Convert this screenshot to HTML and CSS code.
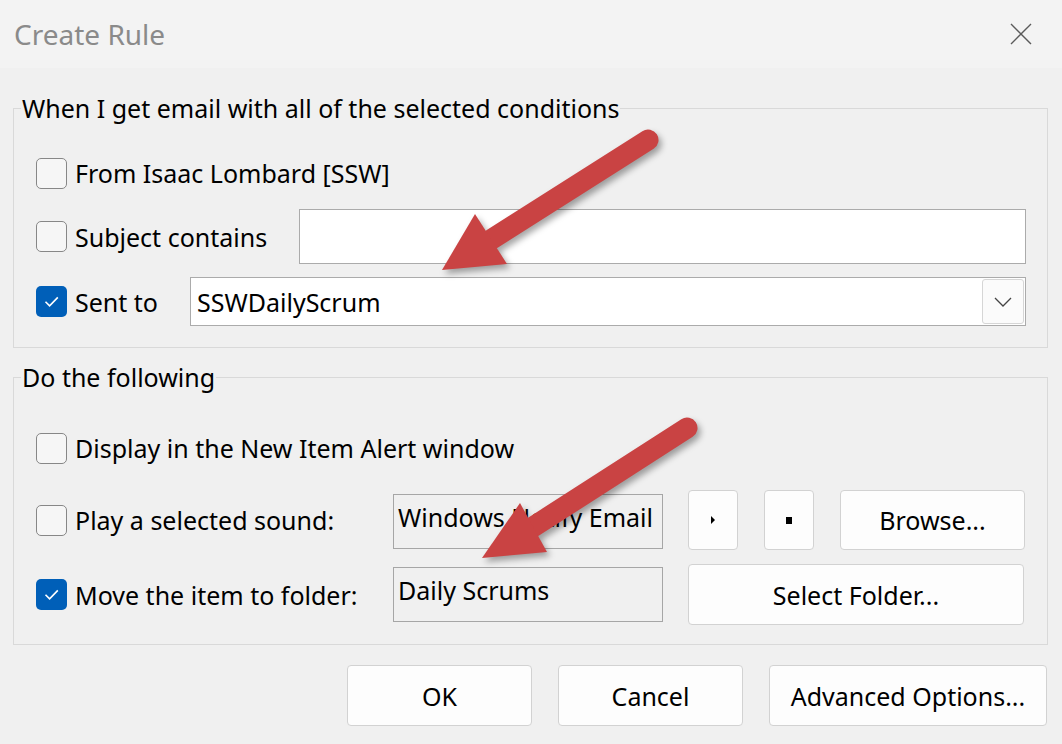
FILE: index.html
```html
<!DOCTYPE html>
<html>
<head>
<meta charset="utf-8">
<link rel="stylesheet" href="styles.css">
</head>
<body>
<div class="window">
  <div class="titlebar">
    <span class="title">Create Rule</span>
    <svg class="close" width="22" height="22" viewBox="0 0 22 22"><path d="M1 1L21 21M21 1L1 21" stroke="#5a5a5a" stroke-width="1.4" fill="none"/></svg>
  </div>

  <fieldset class="group g1">
    <legend>When I get email with all of the selected conditions</legend>
    <div class="row r1">
      <label class="check"><span class="box"></span>From Isaac Lombard [SSW]</label>
    </div>
    <div class="row r2">
      <label class="check w-subject"><span class="box"></span>Subject contains</label>
      <div class="textbox subject"></div>
    </div>
    <div class="row r3">
      <label class="check w-sent"><span class="box checked"><svg width="31" height="31" viewBox="0 0 31 31"><path d="M9.5 15.8L13.6 19.9L21.8 11.4" stroke="#fff" stroke-width="1.6" fill="none"/></svg></span>Sent to</label>
      <div class="combo">
        <span class="combo-text">SSWDailyScrum</span>
        <span class="drop"><svg width="18" height="10" viewBox="0 0 18 10"><path d="M1 1L9 9L17 1" stroke="#444" stroke-width="1.3" fill="none"/></svg></span>
      </div>
    </div>
  </fieldset>

  <fieldset class="group g2">
    <legend>Do the following</legend>
    <div class="row s1">
      <label class="check"><span class="box"></span>Display in the New Item Alert window</label>
    </div>
    <div class="row s2">
      <label class="check w-action"><span class="box"></span>Play a selected sound:</label>
      <div class="field"><span>Windows Notify Email</span></div>
      <button class="btn small"><span class="play"></span></button>
      <button class="btn small"><span class="stop"></span></button>
      <button class="btn browse">Browse...</button>
    </div>
    <div class="row s3">
      <label class="check w-action"><span class="box checked"><svg width="31" height="31" viewBox="0 0 31 31"><path d="M9.5 15.8L13.6 19.9L21.8 11.4" stroke="#fff" stroke-width="1.6" fill="none"/></svg></span>Move the item to folder:</label>
      <div class="field folder"><span>Daily Scrums</span></div>
      <button class="btn select">Select Folder...</button>
    </div>
  </fieldset>

  <div class="footer">
    <button class="btn dlg">OK</button>
    <button class="btn dlg">Cancel</button>
    <button class="btn dlg adv">Advanced Options...</button>
  </div>

  <svg class="arrows" width="1062" height="744" viewBox="0 0 1062 744">
    <g class="arrow">
      <line x1="648" y1="140" x2="492" y2="239" stroke="#c94343" stroke-width="21" stroke-linecap="round"/>
      <polygon points="442,270 475,214 507,264" fill="#c94343"/>
    </g>
    <g class="arrow">
      <line x1="687" y1="428" x2="533" y2="527" stroke="#c94343" stroke-width="21" stroke-linecap="round"/>
      <polygon points="482,558 520,503 547,552" fill="#c94343"/>
    </g>
  </svg>
</div>
</body>
</html>
```

FILE: styles.css
```css
* { box-sizing: border-box; }

body {
  margin: 0;
  background: #f0f0f0;
  font-family: "Noto Sans", "Open Sans", sans-serif;
  color: #000;
}

.window {
  position: relative;
  width: 1062px;
  height: 744px;
  overflow: hidden;
  background: #f0f0f0;
}

.titlebar {
  height: 68px;
  background: #f3f3f3;
  display: flex;
  align-items: center;
  justify-content: space-between;
  padding: 0 30px 0 14px;
}

.title {
  font-size: 28px;
  color: #8a8a8a;
}

.group {
  border: 1px solid #d9d9d9;
  margin: 0 14px 0 13px;
  padding: 0 21px 0 22px;
  min-width: 0;
}

.group legend {
  margin-left: -15px;
  padding: 0 1px;
  font-size: 25px;
  line-height: 30px;
}

.g1 { margin-top: 25px; padding-top: 25px; padding-bottom: 21px; }
.g2 { margin-top: 14px; padding-top: 36px; padding-bottom: 19px; }

.row {
  display: flex;
  align-items: center;
}

.check {
  display: flex;
  align-items: center;
  gap: 8px;
  font-size: 25px;
  white-space: nowrap;
}

.box {
  width: 31px;
  height: 31px;
  flex: none;
  border: 1.5px solid #878787;
  border-radius: 5px;
  background: #f6f6f6;
  display: flex;
}

.box.checked {
  border: none;
  background: #005fb8;
}

.r1 { height: 50px; }
.r2 { height: 55px; margin-top: 11px; }
.r3 { height: 49px; margin-top: 13px; }

.w-subject { width: 263px; flex: none; }
.w-sent { width: 154px; flex: none; }
.w-action { width: 357px; flex: none; }

.textbox {
  flex: 1;
  height: 55px;
  background: #fff;
  border: 1px solid #ababab;
}

.combo {
  flex: 1;
  height: 49px;
  background: #fff;
  border: 1px solid #ababab;
  display: flex;
  align-items: center;
  justify-content: space-between;
  padding: 1px 1px 1px 6px;
}

.combo-text { font-size: 25px; }

.drop {
  width: 42px;
  height: 45px;
  border: 1px solid #d6d6d6;
  border-radius: 3px;
  background: #fbfbfb;
  display: flex;
  align-items: center;
  justify-content: center;
}

.s1 { height: 40px; }
.s2 { height: 60px; margin-top: 22px; }
.s3 { height: 61px; margin-top: 14px; }

.field {
  width: 270px;
  flex: none;
  height: 55px;
  border: 1px solid #a6a6a6;
  background: #f0f0f0;
  overflow: hidden;
  white-space: nowrap;
  font-size: 25px;
  padding: 4px 0 0 4px;
  line-height: 36px;
}

.s2 .field { margin-top: 2px; }

.btn {
  background: #fdfdfd;
  border: 1px solid #d2d2d2;
  border-radius: 4px;
  font-family: inherit;
  font-size: 25px;
  color: #000;
  padding: 0;
  display: flex;
  align-items: center;
  justify-content: center;
}

.s2 .btn { height: 60px; }
.small { width: 50px; margin-left: 25px; }
.small + .small { margin-left: 26px; }
.browse { width: 185px; margin-left: 26px; }
.select { width: 336px; height: 61px; margin-left: 25px; }

.play {
  width: 0;
  height: 0;
  border-left: 4px solid #000;
  border-top: 4px solid transparent;
  border-bottom: 4px solid transparent;
}

.stop {
  width: 6px;
  height: 7px;
  background: #000;
}

.footer {
  display: flex;
  justify-content: flex-end;
  gap: 26px;
  margin-top: 20px;
  padding-right: 15px;
}

.dlg { width: 185px; height: 61px; }
.adv { width: 278px; }

.arrows {
  position: absolute;
  left: 0;
  top: 0;
  pointer-events: none;
}

.arrow {
  filter: drop-shadow(3px 4px 3px rgba(0, 0, 0, 0.35));
}
```
